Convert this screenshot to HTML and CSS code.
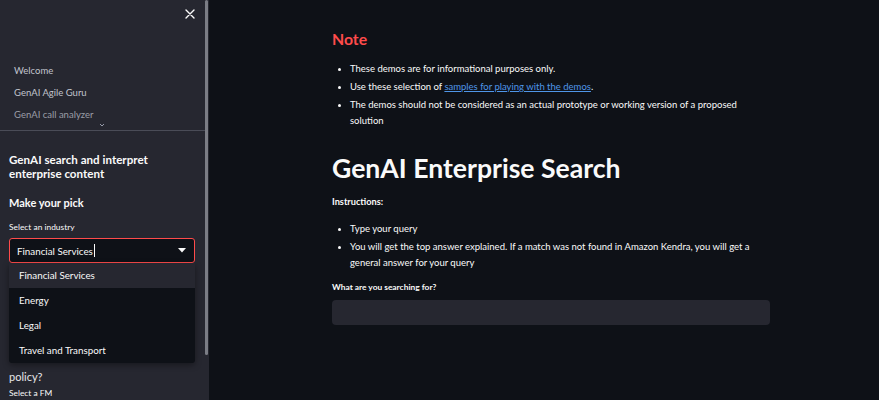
FILE: index.html
```html
<!DOCTYPE html>
<html lang="en">
<head>
<meta charset="utf-8">
<title>GenAI Enterprise Search</title>
<link rel="stylesheet" href="styles.css">
</head>
<body>
<aside class="sidebar">
  <div class="sb-head">
    <button class="close" aria-label="Close sidebar">
      <svg width="10" height="10" viewBox="0 0 10 10"><path d="M1 1L9 9M9 1L1 9" stroke="#fafafa" stroke-width="1.4" stroke-linecap="round"/></svg>
    </button>
  </div>
  <nav class="nav">
    <a class="nav-item">Welcome</a>
    <a class="nav-item">GenAI Agile Guru</a>
    <a class="nav-item fade">GenAI call analyzer</a>
    <span class="chev"><svg width="6" height="4" viewBox="0 0 6 4"><path d="M1 1L3 3L5 1" stroke="#a3a8b8" stroke-width="0.9" fill="none"/></svg></span>
  </nav>
  <div class="sb-body">
    <h3 class="sb-title">GenAI search and interpret enterprise content</h3>
    <h4 class="sb-sub">Make your pick</h4>
    <label class="sb-label">Select an industry</label>
    <div class="select-wrap">
      <div class="select">
        <span class="select-val">Financial Services<span class="cursor"></span></span>
        <svg class="caret" width="8" height="5" viewBox="0 0 8 5"><path d="M0 0H8L4 4.5Z" fill="#fafafa"/></svg>
      </div>
      <ul class="menu">
        <li class="opt active">Financial Services</li>
        <li class="opt">Energy</li>
        <li class="opt">Legal</li>
        <li class="opt">Travel and Transport</li>
      </ul>
    </div>
    <p class="sb-q">policy?</p>
    <label class="sb-label fm">Select a FM</label>
  </div>
  <div class="scroll-thumb"></div>
</aside>
<main class="main">
  <div class="block">
    <h3 class="note">Note</h3>
    <ul class="list">
      <li>These demos are for informational purposes only.</li>
      <li>Use these selection of <a class="link">samples for playing with the demos</a>.</li>
      <li>The demos should not be considered as an actual prototype or working version of a proposed solution</li>
    </ul>
    <h1 class="title">GenAI Enterprise Search</h1>
    <p class="instr">Instructions:</p>
    <ul class="list list2">
      <li>Type your query</li>
      <li>You will get the top answer explained. If a match was not found in Amazon Kendra, you will get a general answer for your query</li>
    </ul>
    <label class="q-label">What are you searching for?</label>
    <div class="q-input"></div>
  </div>
</main>
</body>
</html>
```

FILE: styles.css
```css
* { box-sizing: border-box; }
html, body { margin: 0; padding: 0; }
body {
  display: flex;
  width: 879px;
  height: 400px;
  overflow: hidden;
  font-family: "Lato", "Noto Sans", sans-serif;
  color: #fafafa;
  background: #0e1117;
}
.sidebar {
  position: relative;
  width: 209px;
  flex: none;
  height: 400px;
  background: #262730;
  overflow: hidden;
}
.sb-head {
  height: 60px;
  display: flex;
  justify-content: flex-end;
  align-items: flex-start;
  padding: 9px 14px 0 0;
}
.close {
  background: none;
  border: 0;
  padding: 0;
  width: 10px;
  height: 10px;
  display: flex;
}
.nav {
  position: relative;
  display: flex;
  flex-direction: column;
  padding: 0 0 0 14px;
  height: 71px;
  border-bottom: 1px solid #4a4c57;
  margin-right: 4px;
}
.nav-item {
  font-size: 9.5px;
  line-height: 22px;
  color: #c1c4cd;
}
.nav-item.fade { color: #9a9da7; }
.chev {
  position: absolute;
  left: 99px;
  top: 63px;
  display: flex;
}
.sb-body {
  padding: 22px 9px 0 9px;
  position: relative;
}
.sb-title {
  margin: 0;
  font-size: 11.6px;
  line-height: 14px;
  font-weight: 700;
  width: 180px;
}
.sb-sub {
  margin: 14px 0 0;
  font-size: 11px;
  line-height: 15px;
  font-weight: 700;
}
.sb-label {
  display: block;
  margin-top: 11px;
  font-size: 8.4px;
  line-height: 12px;
  color: #fafafa;
}
.select-wrap {
  position: relative;
  margin-top: 5px;
  width: 186px;
}
.select {
  height: 25px;
  border: 1px solid #ff4b4b;
  border-radius: 3px;
  background: #0e1117;
  display: flex;
  align-items: center;
  justify-content: space-between;
  padding: 0 8px 0 7px;
}
.select-val {
  font-size: 9.8px;
  display: flex;
  align-items: center;
}
.cursor {
  display: inline-block;
  width: 1px;
  height: 13px;
  background: #fafafa;
  margin-left: 1px;
}
.menu {
  position: absolute;
  z-index: 2;
  left: 0;
  top: 25px;
  width: 186px;
  margin: 0;
  padding: 0;
  list-style: none;
  background: #0e1117;
  border-radius: 0 0 3px 3px;
  box-shadow: 0 2px 6px rgba(0,0,0,0.4);
}
.opt {
  height: 25px;
  line-height: 25px;
  padding-left: 10px;
  font-size: 9.8px;
}
.opt.active { background: #262730; }
.sb-q {
  margin: 106px 0 0;
  font-size: 11px;
  line-height: 16px;
  font-weight: 400;
  color: #e6e7ea;
}
.fm { margin-top: 2px; }
.scroll-thumb {
  position: absolute;
  right: 1px;
  top: 0;
  width: 3px;
  height: 355px;
  background: #7b7d85;
  border-radius: 2px;
}
.main {
  flex: 1;
  height: 400px;
  background: #0e1117;
  padding: 29px 0 0 123px;
}
.block { width: 438px; }
.note {
  margin: 0;
  color: #ff4b4b;
  font-size: 15.8px;
  line-height: 20px;
  font-weight: 700;
}
.list {
  margin: 12px 0 0;
  padding: 0 0 0 18px;
  font-size: 9.5px;
  line-height: 16.4px;
}
.list li { margin-bottom: 1.6px; }
.list li::marker { font-size: 8px; }
.link {
  color: #4f96e8;
  text-decoration: underline;
}
.title {
  margin: 20px 0 0;
  font-size: 26.6px;
  line-height: 36px;
  font-weight: 700;
}
.instr {
  margin: 8px 0 0;
  font-size: 9.2px;
  font-weight: 700;
  line-height: 16px;
}
.list2 { margin-top: 11px; }
.q-label {
  display: block;
  margin-top: 9px;
  font-size: 8.4px;
  line-height: 12px;
  font-weight: 700;
}
.q-input {
  margin-top: 7px;
  height: 25px;
  background: #262730;
  border-radius: 4px;
}
```
